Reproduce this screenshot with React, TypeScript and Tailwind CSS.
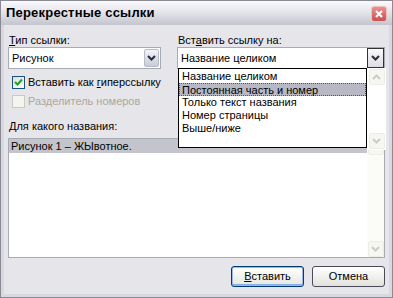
import React from 'react';

const font = { fontFamily: '"Liberation Sans", Arial, sans-serif' };

function Chevron({ faded = false }: { faded?: boolean }) {
  return (
    <svg width="9" height="6" viewBox="0 0 9 6">
      <polyline
        points="1,1 4.5,4.5 8,1"
        fill="none"
        stroke={faded ? '#c9cdc0' : '#2b2b3a'}
        strokeWidth="2"
      />
    </svg>
  );
}

function ChevronUp() {
  return (
    <svg width="9" height="6" viewBox="0 0 9 6">
      <polyline points="1,5 4.5,1.5 8,5" fill="none" stroke="#c9cdc0" strokeWidth="2" />
    </svg>
  );
}

function ComboButton({ open = false }: { open?: boolean }) {
  return (
    <div
      className={
        open
          ? 'w-[17px] h-[20px] flex items-center justify-center border border-[#333] bg-gradient-to-b from-[#fafafa] to-[#dcdce4]'
          : 'w-[15px] h-[18px] mr-[1px] flex items-center justify-center border border-[#b8bcc8] rounded-[2px] bg-gradient-to-b from-[#f4f4f8] to-[#c8ccd8]'
      }
    >
      <Chevron />
    </div>
  );
}

function ScrollArrow({ up = false }: { up?: boolean }) {
  return (
    <div className="w-[16px] h-[16px] flex items-center justify-center border border-[#eceee6] rounded-[2px] bg-[#f7f7f2]">
      {up ? <ChevronUp /> : <Chevron faded />}
    </div>
  );
}

export default function App() {
  const options = [
    'Название целиком',
    'Постоянная часть и номер',
    'Только текст названия',
    'Номер страницы',
    'Выше/ниже',
  ];

  return (
    <div
      className="w-[393px] h-[298px] flex flex-col border border-[#8a8a94] bg-[#d8d8e0] text-[11px] text-black"
      style={font}
    >
      {/* title bar */}
      <div className="h-[24px] shrink-0 flex items-center justify-between pl-[5px] pr-[5px] bg-gradient-to-b from-[#fbfbfd] via-[#e2e2ea] to-[#c4c4ce]">
        <span className="text-[13px] font-bold tracking-[0.2px]">Перекрестные ссылки</span>
        <div className="w-[16px] h-[16px] mt-[1px] rounded-[3px] border border-[#f0c0c0] bg-gradient-to-b from-[#e89090] to-[#c85050] flex items-center justify-center">
          <svg width="8" height="8" viewBox="0 0 8 8">
            <path d="M1 1 L7 7 M7 1 L1 7" stroke="#fff" strokeWidth="2" />
          </svg>
        </div>
      </div>

      {/* client */}
      <div className="flex-1 mx-[3px] mb-[3px] bg-[#e6e5ea] flex flex-col px-[4px]">
        <div className="flex gap-[16px] mt-[9px]">
          {/* left column */}
          <div className="w-[153px] flex flex-col">
            <div className="h-[13px] leading-[13px] pl-[1px]">
              <u>Т</u>ип ссылки:
            </div>
            <div className="h-[22px] flex items-center justify-between bg-white border border-[#a5acb5]">
              <span className="pl-[3px]">Рисунок</span>
              <ComboButton />
            </div>
            <div className="h-[15px] mt-[6px] flex items-center gap-[3px] pl-[4px]">
              <div className="w-[13px] h-[13px] border border-[#1c5180] bg-gradient-to-br from-[#dcdcd8] to-white flex items-center justify-center">
                <svg width="9" height="9" viewBox="0 0 9 9">
                  <polyline points="1,4 3.5,6.5 8,1.5" fill="none" stroke="#21a121" strokeWidth="2" />
                </svg>
              </div>
              <span>
                Вставить как <u>г</u>иперссылку
              </span>
            </div>
            <div className="h-[15px] mt-[4px] flex items-center gap-[3px] pl-[4px]">
              <div className="w-[13px] h-[13px] border border-[#cacac4] bg-[#f4f4f0]" />
              <span className="text-[#aca899]">Разделитель номеров</span>
            </div>
          </div>

          {/* right column */}
          <div className="flex-1 flex flex-col relative">
            <div className="h-[13px] leading-[13px] pl-[1px]">
              Вст<u>а</u>вить ссылку на:
            </div>
            <div className="h-[22px] flex items-center justify-between bg-white border border-[#a5acb5]">
              <span className="pl-[3px]">Название целиком</span>
              <ComboButton open />
            </div>

            {/* open dropdown */}
            <div className="absolute left-[1px] top-[34px] z-10 flex">
              <div className="w-[189px] h-[80px] bg-white border border-black flex flex-col pt-[1px]">
                {options.map((o, i) => (
                  <div
                    key={o}
                    className={
                      i === 1
                        ? 'h-[13px] leading-[12px] pl-[2px] bg-[#b8b8c4] border border-dotted border-[#555]'
                        : 'h-[13px] leading-[13px] pl-[3px]'
                    }
                  >
                    {o}
                  </div>
                ))}
              </div>
              <div className="w-[19px] h-[82px] bg-white flex flex-col justify-between items-center py-[1px]">
                <ScrollArrow up />
                <ScrollArrow />
              </div>
            </div>
          </div>
        </div>

        <div className="h-[13px] leading-[13px] mt-[11px] pl-[1px]">
          <u>Д</u>ля какого названия:
        </div>
        <div className="h-[120px] mt-[5px] bg-white border border-[#a5acb5] flex">
          <div className="flex-1">
            <div className="h-[14px] leading-[14px] pl-[2px] bg-[#c4c4cc]">Рисунок 1 – ЖЫвотное.</div>
          </div>
          <div className="w-[17px] bg-[#fbfbf8] flex flex-col justify-between items-center">
            <ScrollArrow up />
            <ScrollArrow />
          </div>
        </div>

        <div className="flex justify-end gap-[8px] mt-[8px]">
          <button className="w-[73px] h-[21px] rounded-[3px] border border-[#003c74] bg-gradient-to-b from-white to-[#e6e6e0] shadow-[inset_0_0_0_1px_#9bb8e8,inset_0_-1px_0_1px_#89ade4] text-[11px]">
            <u>В</u>ставить
          </button>
          <button className="w-[73px] h-[21px] rounded-[3px] border border-[#4a4a5a] bg-gradient-to-b from-white to-[#e2e2dc] text-[11px]">
            Отмена
          </button>
        </div>
      </div>
    </div>
  );
}
